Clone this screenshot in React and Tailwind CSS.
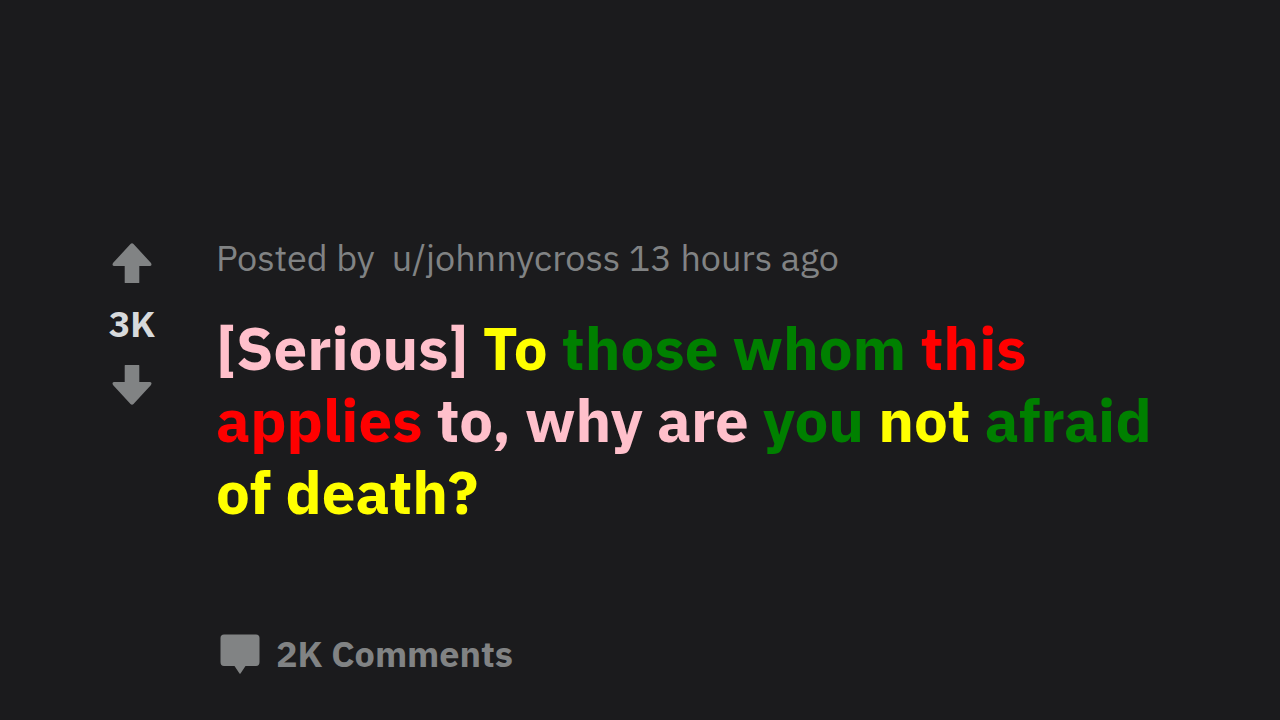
const titleParts = [
  { text: '[Serious]', color: 'text-[#ffc0cb]' },
  { text: 'To', color: 'text-[#ffff00]' },
  { text: 'those whom', color: 'text-[#008000]' },
  { text: 'this applies', color: 'text-[#ff0000]' },
  { text: 'to, why are', color: 'text-[#ffc0cb]' },
  { text: 'you', color: 'text-[#008000]' },
  { text: 'not', color: 'text-[#ffff00]' },
  { text: 'afraid', color: 'text-[#008000]' },
  { text: 'of death?', color: 'text-[#ffff00]' },
]

function ArrowIcon({ className = '' }) {
  return (
    <svg viewBox="0 0 40 40" className={`size-10 ${className}`} fill="currentColor" aria-hidden="true">
      <path d="M18.500 1Q20 -.3 21.500 1L39 20Q40.500 23 37.500 23H27.300V39.500Q27.300 40 26.800 40H13.200Q12.700 40 12.700 39.500V23H2.500Q-.5 23 1 20Z" />
    </svg>
  )
}

function VoteColumn({ score }) {
  return (
    <div className="flex w-16 shrink-0 flex-col items-center text-[#818384]">
      <button type="button" aria-label="Upvote">
        <ArrowIcon />
      </button>
      <span className="my-[21px] text-[36px] leading-[40px] font-bold text-[#d7dadc]">{score}</span>
      <button type="button" aria-label="Downvote">
        <ArrowIcon className="-scale-y-100" />
      </button>
    </div>
  )
}

export default function App() {
  return (
    <main className="flex min-h-screen gap-[52px] bg-[#1b1b1d] pt-[243px] pr-20 pb-[42px] pl-[100px] font-['IBM_Plex_Sans','Noto_Sans',sans-serif]">
      <VoteColumn score="3K" />
      <article className="flex min-w-0 flex-1 flex-col">
        <p className="text-[36px] leading-[30px] whitespace-pre text-[#818384]">
          Posted by{'  '}
          <a href="#user">u/johnnycross</a> 13 hours ago
        </p>
        <h1 className="mt-[39px] text-[60px] leading-[72px] font-bold">
          {titleParts.map(({ text, color }) => (
            <span key={text} className={color}>{text} </span>
          ))}
        </h1>
        <a href="#comments" className="mt-auto ml-1 flex items-center gap-4 text-[36px] leading-[48px] font-bold text-[#818384]">
          <svg viewBox="0 0 40 40" className="size-10" fill="currentColor" aria-hidden="true">
            <path d="M4 .5H36Q39.500 .5 39.500 4V28Q39.500 32 36 32H25.500L20.500 39.500Q20 40 19.500 39.500L14.500 32H4Q.5 32 .5 28V4Q.5 .5 4 .5Z" />
          </svg>
          2K Comments
        </a>
      </article>
    </main>
  )
}
